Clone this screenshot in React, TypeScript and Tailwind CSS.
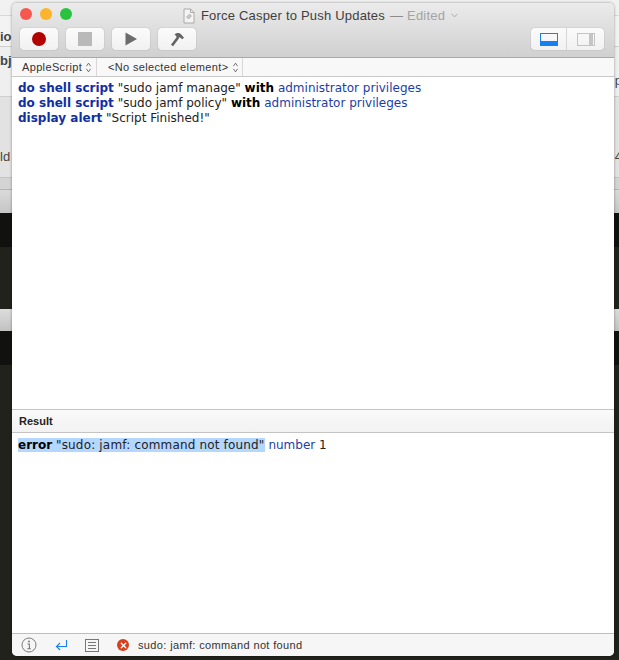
import { ChevronDown, ChevronsUpDown, X } from "lucide-react";

const kw = "font-bold text-[#0f2fa6]";
const prop = "text-[#1c3da8]";

function ToolButton({ children }: { children: React.ReactNode }) {
  return (
    <div className="flex h-[22px] w-[38px] items-center justify-center rounded-[4px] bg-gradient-to-b from-[#fbfbfb] to-[#f1f1f1] shadow-[0_0_1px_rgba(0,0,0,0.45)]">
      {children}
    </div>
  );
}

function Updown() {
  return <ChevronsUpDown className="h-[13px] w-[9px] text-[#444]" strokeWidth={1.6} preserveAspectRatio="none" />;
}

function Backdrop() {
  return (
    <div className="flex h-[660px] flex-col overflow-hidden font-['Liberation_Sans',sans-serif] text-[13px] font-bold text-[#444]">
      <div className="h-[16px] border-b border-[#d8d8d8] bg-[#f1f1f1]" />
      <div className="flex h-[31px] items-end border-b border-[#cfcfcf] bg-[#f3f3f3] leading-[14px] pb-[2px]">
        <span>io</span>
      </div>
      <div className="flex h-[50px] justify-between border-b border-[#cfcfcf] bg-[#efefef]">
        <span className="mt-[4px]">bj</span>
        <span className="mt-[24px] -mr-[3px] font-normal">p</span>
      </div>
      <div className="flex h-[81px] items-end justify-between border-b border-[#c4c4c4] bg-[#e2e2e2] pb-[11px] font-normal">
        <span>ld</span>
        <span className="-mr-[3px]">4</span>
      </div>
      <div className="h-[12px] border-b border-[#b4b4b4] bg-[#d4d4d4]" />
      <div className="h-[23px] bg-gradient-to-b from-[#dadada] to-[#c6c6c6]" />
      <div className="h-[34px] bg-[#111110]" />
      <div className="h-[62px] bg-[#22221d]" />
      <div className="h-[22px] bg-gradient-to-b from-[#dddddd] to-[#c2c2c2]" />
      <div className="h-[34px] bg-[#111110]" />
      <div className="flex-1 bg-[#22221d]" />
    </div>
  );
}

export default function App() {
  return (
    <div className="relative h-[660px] w-[619px] overflow-hidden">
      <Backdrop />

      {/* script editor window */}
      <div className="absolute left-[12px] top-[3px] flex h-[653px] w-[602px] flex-col overflow-hidden rounded-[5px] bg-white font-['DejaVu_Sans',sans-serif] shadow-[0_0_3px_rgba(0,0,0,0.4)]">
        {/* title + toolbar */}
        <div className="flex h-[55px] flex-col border-b border-[#a9a9a9] bg-gradient-to-b from-[#ebebeb] to-[#d0d0d0]">
          <div className="relative flex h-[25px] items-center justify-center pl-[17px]">
            <div className="absolute left-[8px] top-[5px] flex gap-[8px]">
              <div className="h-[12px] w-[12px] rounded-full bg-[#f6574f]" />
              <div className="h-[12px] w-[12px] rounded-full bg-[#fbb42c]" />
              <div className="h-[12px] w-[12px] rounded-full bg-[#2ac33f]" />
            </div>
            <div className="flex items-center gap-[5px] font-['Liberation_Sans',sans-serif] text-[13px] tracking-[0.2px] text-[#3f3f3f]">
              <svg width="12" height="16" viewBox="0 0 12 16" fill="none" className="mr-[1px]">
                <path d="M1 1h6.5L11 4.5V15H1z" fill="#f4f4f4" stroke="#9a9a9a" strokeWidth="0.8" />
                <path d="M7.5 1v3.5H11" stroke="#9a9a9a" strokeWidth="0.8" />
                <path d="M3.5 9l3-3 2 2-3 3z" fill="#c9c9c9" stroke="#a0a0a0" strokeWidth="0.6" />
              </svg>
              <span>Force Casper to Push Updates</span>
              <span className="text-[#a3a3a3]">
                <span className="text-[#8d8d8d]">—</span> Edited
              </span>
              <ChevronDown className="-ml-[1px] h-[11px] w-[11px] text-[#a3a3a3]" strokeWidth={2} />
            </div>
          </div>
          <div className="flex justify-between pl-[8px] pr-[10px]">
            <div className="flex gap-[8px]">
              <ToolButton>
                <div className="h-[14px] w-[14px] rounded-full bg-[#b30000]" />
              </ToolButton>
              <ToolButton>
                <div className="h-[14px] w-[14px] bg-[#b9b9b9]" />
              </ToolButton>
              <ToolButton>
                <svg width="14" height="14" viewBox="0 0 14 14">
                  <path d="M1.5 0.5L13 7 1.5 13.5z" fill="#6c6c6c" />
                </svg>
              </ToolButton>
              <ToolButton>
                <svg width="16" height="16" viewBox="0 0 16 16" fill="none">
                  <path d="M3 14.5L9 6.5" stroke="#636363" strokeWidth="2.6" />
                  <path d="M5.5 3.5C8 1.5 10.5 1.6 12 3.2L15 6.8 13.2 8.2 10.8 6.2 8.6 7.6 7.2 5.2C6.8 4.6 6.2 4 5.5 3.5z" fill="#636363" />
                </svg>
              </ToolButton>
            </div>
            <div className="flex h-[22px] w-[73px] rounded-[4px] bg-gradient-to-b from-[#fbfbfb] to-[#f1f1f1] shadow-[0_0_1px_rgba(0,0,0,0.45)]">
              <div className="flex w-[36px] items-center justify-center border-r border-[#d6d6d6]">
                <div className="flex h-[13px] w-[18px] flex-col justify-end border border-[#1581f1]">
                  <div className="h-[4px] bg-[#1581f1]" />
                </div>
              </div>
              <div className="flex flex-1 items-center justify-center">
                <div className="flex h-[13px] w-[18px] justify-end border border-[#c4c4c4]">
                  <div className="mr-[1px] w-[4px] bg-[#c4c4c4]" />
                </div>
              </div>
            </div>
          </div>
        </div>

        {/* navigation bar */}
        <div className="flex h-[19px] items-center border-b border-[#c8c8c8] bg-[#f8f8f8] font-['Liberation_Sans',sans-serif] text-[11px] tracking-[0.35px] text-[#333]">
          <div className="flex h-full w-[85px] items-center justify-between border-r border-[#d8d8d8] pl-[10px] pr-[3px]">
            <span>AppleScript</span>
            <Updown />
          </div>
          <div className="flex h-full w-[146px] items-center justify-between border-r border-[#d8d8d8] pl-[11px] pr-[2px]">
            <span>&lt;No selected element&gt;</span>
            <Updown />
          </div>
        </div>

        {/* editor */}
        <div className="h-[332px] px-[6px] pt-[4px] text-[12px] leading-[15px] text-[#222]">
          <div>
            <span className={kw}>do shell script</span> "sudo jamf manage" <b className="text-black">with</b>{" "}
            <span className={prop}>administrator privileges</span>
          </div>
          <div>
            <span className={kw}>do shell script</span> "sudo jamf policy" <b className="text-black">with</b>{" "}
            <span className={prop}>administrator privileges</span>
          </div>
          <div>
            <span className={kw}>display alert</span> "Script Finished!"
          </div>
        </div>

        {/* result header */}
        <div className="flex h-[24px] items-center border-y border-[#c4c4c4] bg-gradient-to-b from-[#fafafa] to-[#f2f2f2] pl-[7px] font-['Liberation_Sans',sans-serif] text-[11px] font-bold text-[#222]">
          Result
        </div>

        {/* result pane */}
        <div className="flex-1 px-[6px] pt-[5px] text-[12px] leading-[15px] text-[#222]">
          <span className="bg-[#b3d7ff]">
            <b className="text-black">error</b> <span className="tracking-[0.17px]">"sudo: jamf: command not found"</span>
          </span>{" "}
          <span className="text-[#1c3da8]">number</span> 1
        </div>

        {/* status bar */}
        <div className="flex h-[23px] items-center border-t border-[#bdbdbd] bg-[#f6f6f6] text-[11px] text-[#333]">
          <svg width="16" height="16" viewBox="0 0 16 16" fill="none" className="ml-[9px] text-[#7a7a7a]">
            <circle cx="8" cy="8" r="7" stroke="currentColor" strokeWidth="1" />
            <circle cx="8" cy="4.6" r="1" fill="currentColor" />
            <path d="M6.4 7h2v4.6M6.2 11.8h3.6" stroke="currentColor" strokeWidth="1.1" />
          </svg>
          <svg width="13" height="13" viewBox="0 0 13 13" fill="none" className="ml-[18px] text-[#1581f1]">
            <path d="M11.5 1v6.5H1.5M5 4L1.5 7.5 5 11" stroke="currentColor" strokeWidth="1.1" />
          </svg>
          <svg width="14" height="13" viewBox="0 0 14 13" fill="none" className="ml-[17px] text-[#777]">
            <rect x="0.5" y="0.5" width="13" height="12" stroke="currentColor" />
            <path d="M3 3.5h8M3 6.5h8M3 9.5h8" stroke="currentColor" />
          </svg>
          <div className="ml-[18px] flex h-[12px] w-[12px] items-center justify-center rounded-full bg-[#d5401f]">
            <X className="h-[9px] w-[9px] text-white" strokeWidth={3.5} />
          </div>
          <span className="ml-[9px] font-['Liberation_Sans',sans-serif] text-[11px] tracking-[0.36px]">sudo: jamf: command not found</span>
        </div>
      </div>
    </div>
  );
}
